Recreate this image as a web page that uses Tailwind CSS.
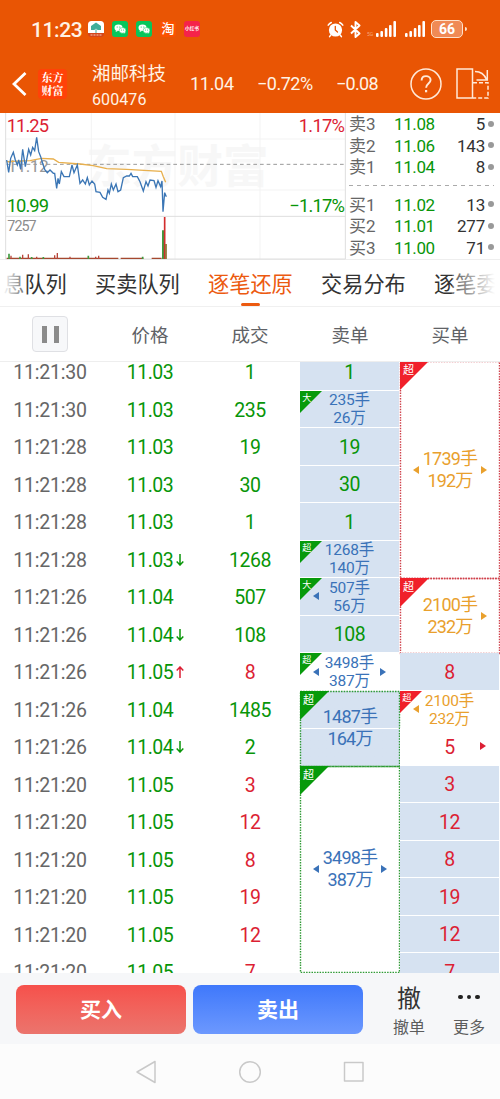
<!DOCTYPE html>
<html lang="zh-CN">
<head>
    <meta charset="UTF-8">
    <meta name="viewport" content="width=device-width, initial-scale=1.0">
    <title>湘邮科技 600476</title>
    <script src="https://cdn.jsdelivr.net/npm/@tailwindcss/browser@4"></script>
</head>
<body class="w-[500px] h-[1099px] overflow-hidden bg-white font-['Roboto','Noto_Sans_CJK_SC',sans-serif] text-[#333]">
    <!-- Header -->
    <header class="h-[113px] bg-[#e95504] text-[#fff3e6]">
        <!-- Status bar -->
        <div class="h-[58px] pl-[31px] flex items-center">
            <span class="w-[57px] text-[21px] leading-none font-medium tracking-[-0.4px] pt-0.5">11:23</span>
            <div class="flex items-center gap-2">
                <svg class="w-4 h-4" viewBox="0 0 16 16">
                    <rect width="16" height="16" rx="3.5" fill="#d5461b"/>
                    <path d="M0 12V3.5A3.5 3.5 0 0 1 3.5 0h9A3.5 3.5 0 0 1 16 3.500V12z" fill="#fff"/>
                    <path d="M8 1.500L13 5v4h-3.500L8.500 7.500V12h-1V7.500L6.500 9H3V5z" fill="#3fae9b"/>
                    <path d="M2.500 14h11" stroke="#f6c9b5" stroke-width="1.200" stroke-dasharray="2 1"/>
                </svg>
                <svg class="w-4 h-4" viewBox="0 0 16 16">
                    <rect width="16" height="16" rx="3" fill="#07c65b"/>
                    <ellipse cx="6.500" cy="6.800" rx="4" ry="3.300" fill="#fff"/>
                    <ellipse cx="10.500" cy="9.400" rx="3.400" ry="2.800" fill="#fff" stroke="#07c65b" stroke-width=".5"/>
                    <path d="M4 9l-.3 2 2-1zM12 11.500l1 1.200.2-2z" fill="#fff"/>
                    <g fill="#07c65b"><circle cx="5.200" cy="6" r=".6"/><circle cx="7.800" cy="6" r=".6"/><circle cx="9.400" cy="9" r=".5"/><circle cx="11.600" cy="9" r=".5"/></g>
                </svg>
                <svg class="w-4 h-4" viewBox="0 0 16 16">
                    <rect width="16" height="16" rx="3" fill="#07c65b"/>
                    <ellipse cx="6.500" cy="6.800" rx="4" ry="3.300" fill="#fff"/>
                    <ellipse cx="10.500" cy="9.400" rx="3.400" ry="2.800" fill="#fff" stroke="#07c65b" stroke-width=".5"/>
                    <path d="M4 9l-.3 2 2-1zM12 11.500l1 1.200.2-2z" fill="#fff"/>
                    <g fill="#07c65b"><circle cx="5.200" cy="6" r=".6"/><circle cx="7.800" cy="6" r=".6"/><circle cx="9.400" cy="9" r=".5"/><circle cx="11.600" cy="9" r=".5"/></g>
                </svg>
                <span class="w-4 h-4 rounded-[3px] bg-[#fb5200] text-[13px] leading-4 text-center text-white font-medium">淘</span>
                <span class="w-4 h-4 rounded-[3px] bg-[#f5234a] text-[4.7px] leading-4 text-center text-white font-bold">小红书</span>
            </div>
            <svg class="w-[17px] h-[17px] ml-[127px]" viewBox="0 0 17 17" fill="none" stroke="#fff" stroke-linecap="round">
                <circle cx="8.500" cy="9" r="6.600" fill="#fff" stroke="none"/>
                <path d="M1.200 4.200A8 8 0 0 1 4.300 1.500M15.800 4.200A8 8 0 0 0 12.700 1.500" stroke-width="1.500"/>
                <path d="M3.800 14L2.600 15.600M13.200 14l1.200 1.600" stroke-width="1.500"/>
                <path d="M8.300 5.300V9l2.200 2" stroke="#e95504" stroke-width="1.300"/>
            </svg>
            <svg class="w-[11px] h-[17px] ml-1.5" viewBox="0 0 11 17" fill="none" stroke="#fff" stroke-width="1.900" stroke-linejoin="round">
                <path d="M1 4.500l8.500 8L5.500 16V1l4 3.500L1 12.500"/>
            </svg>
            <span class="w-[9px] ml-1.5 mt-2.5 text-[5px] leading-none text-[#f5a77c]">5G</span>
            <svg class="w-5 h-4" viewBox="0 0 20 16" fill="#fff">
                <rect x="0" y="12" width="2.600" height="4" rx="1"/><rect x="4.400" y="10" width="2.600" height="6" rx="1"/><rect x="8.800" y="7" width="2.600" height="9" rx="1"/><rect x="13" y="4" width="2.600" height="12" rx="1"/><rect x="17.400" y="0" width="2.600" height="16" rx="1"/>
            </svg>
            <svg class="w-5 h-4 ml-[9px]" viewBox="0 0 20 16" fill="#fff">
                <rect x="0" y="12" width="2.600" height="4" rx="1"/><rect x="4.400" y="10" width="2.600" height="6" rx="1"/><rect x="8.800" y="7" width="2.600" height="9" rx="1"/><rect x="13" y="4" width="2.600" height="12" rx="1"/><rect x="17.400" y="0" width="2.600" height="16" rx="1"/>
            </svg>
            <span class="w-8 h-[18px] ml-1.5 rounded-[5px] border-[1.5px] border-[#ffe1ca] bg-[#f08a55] text-white text-sm leading-4 font-bold text-center">66</span>
            <span class="w-0.5 h-1 ml-0.5 rounded-r bg-[#ffe1ca]"></span>
        </div>
        <!-- Stock title -->
        <div class="h-[55px] pl-3 flex items-center">
            <svg class="w-[15px] h-6 -mt-1" viewBox="0 0 15 24" fill="none" stroke="#fff" stroke-width="2.800"><path d="M13.500 1L2 12l11.500 11"/></svg>
            <div class="w-[29px] h-[30px] ml-[11px] -mt-1 rounded bg-[#ff4208] font-['Noto_Serif_CJK_SC','Noto_Sans_CJK_SC',serif] font-bold text-white text-[11px] leading-[13px] text-center pt-0.5">东方<br>财富</div>
            <div class="w-[100px] pl-[25px]">
                <div class="text-[18.500px] leading-[28px] whitespace-nowrap">湘邮科技</div>
                <div class="text-base leading-6 tracking-[0.1px]">600476</div>
            </div>
            <span class="w-[67px] ml-[23px] text-[18px] -mt-1 tracking-[-0.3px]">11.04</span>
            <span class="w-[79px] text-[18px] -mt-1 tracking-[-0.5px]">−0.72%</span>
            <span class="w-[74px] text-[18px] -mt-1 tracking-[-0.7px]">−0.08</span>
            <svg class="w-8 h-8 -mt-1" viewBox="0 0 32 32" fill="none" stroke="#ffe9d8" stroke-width="1.500">
                <circle cx="16" cy="16" r="15"/>
                <path d="M11.600 12.500c0-6 9-5.500 9-.5 0 3.500-4.500 3.500-4.500 7.800" stroke-width="1.900"/>
                <path d="M16.100 22v2.300" stroke-width="2.200"/>
            </svg>
            <svg class="w-[33px] h-[31px] ml-3.5 -mt-1" viewBox="0 0 33 31" fill="none" stroke="#ffe9d8" stroke-width="1.500">
                <path d="M1 1h15.500v29H1z"/>
                <path d="M17 14.800h15V30H17" stroke-dasharray="4 2"/>
                <path d="M19 3.500c6 0 9.500 3 11.500 8M31.300 2v10H20.500"/>
            </svg>
        </div>
    </header>

    <!-- Mini chart and order book -->
    <section class="h-[147px] flex border-b border-[#eee]">
        <svg class="w-[346px] h-[147px] shrink-0" viewBox="0 9 1038 441" fill="none">
            <text x="258" y="218" font-size="137" font-weight="700" fill="#f7f7f7">东方财富</text>
            <path d="M17 87H1036M17 240H1036M274 9V447M525 9V447M780 9V447" stroke="#f3f3f3" stroke-width="3"/>
            <path d="M17 9V447M1036 9V447M17 319H1036M17 447H1036" stroke="#dedede" stroke-width="3"/>
            <text x="22" y="186" font-size="52" textLength="124" fill="#999">11.12</text>
            <path d="M20 163H1036" stroke="#999" stroke-width="3" stroke-dasharray="11 9"/>
            <path d="M20 155L90 152 125 145 160 147 176 157 240 162 280 167 320 176 380 178 484 184 490 200 497 217" stroke="#e8b04e" stroke-width="4"/>
            <path d="M20 150L26 187 32 145 40 127 46 150 52 165 56 150 62 178 68 118 76 170 86 118 92 135 98 112 104 122 110 82 116 125 122 140 128 160 134 178 142 188 150 180 160 190 164 190 170 235 174 205 178 222 184 185 192 200 208 200 216 165 222 188 232 165 240 220 248 210 256 222 262 203 268 225 276 213 284 222 288 245 300 247 308 262 318 268 324 240 328 250 334 222 340 240 348 222 354 245 362 240 370 203 380 198 388 198 393 190 398 200 412 200 420 215 430 243 438 215 444 228 450 210 462 212 468 232 474 212 482 230 486 213 489 305 494 248 499 260" stroke="#3b76b5" stroke-width="4"/>
            <!-- volume -->
            <path d="M20 445H355M362 445H430M455 445H485" stroke="#a5482f" stroke-width="4"/>
            <path d="M27 447V431M60 447V440M95 447V441M130 447V441M265 447V437M428 447V440" stroke="#3f9a3f" stroke-width="5"/>
            <path d="M33 447V437M68 447V434M85 447V433M110 447V440M164 447V436M172 447V429M210 447V440M287 447V440M296 447V437" stroke="#b8453a" stroke-width="4"/>
            <path d="M489 447V361" stroke="#3f9a3f" stroke-width="6"/>
            <path d="M494 447V321" stroke="#d22d2d" stroke-width="5"/>
            <path d="M498 447V402" stroke="#8a6d2c" stroke-width="5"/>
            <text x="20" y="65" font-size="55" textLength="127" fill="#dc1f34">11.25</text>
            <text x="20" y="305" font-size="55" textLength="127" fill="#089508">10.99</text>
            <text x="22" y="363" font-size="43" textLength="88" fill="#8c8c8c">7257</text>
            <text x="896" y="65" font-size="55" textLength="139" fill="#dc1f34">1.17%</text>
            <text x="868" y="305" font-size="55" textLength="167" fill="#089508">−1.17%</text>
        </svg>
        <div class="flex-1 pl-[3px] pr-1.5 pt-px text-[17px] leading-[21.500px]">
            <div id="asks"></div>
            <div class="h-4 pt-1.5"><svg class="w-full h-px" viewBox="0 0 145 1" preserveAspectRatio="none"><path d="M0 .5H145" stroke="#aaa" stroke-dasharray="4 4"/></svg></div>
            <div id="bids"></div>
        </div>
    </section>

    <!-- Tabs -->
    <nav class="relative h-[47px] flex gap-7 -ml-[18px] w-[518px] overflow-hidden whitespace-nowrap border-b border-[#f0f0f0] text-[21.200px] leading-[49px]">
        <span class="w-[85px] shrink-0">消息队列</span>
        <span class="w-[85px] shrink-0">买卖队列</span>
        <span class="relative w-[85px] shrink-0 text-[#ec5a10]">逐笔还原<i class="absolute left-[33px] bottom-0 w-[19px] h-[3px] rounded-full bg-[#ec5a10]"></i></span>
        <span class="w-[85px] shrink-0">交易分布</span>
        <span class="w-[85px] shrink-0">逐笔委托</span>
        <div class="absolute left-0 top-0 w-[43px] h-11 bg-linear-to-r from-white from-48% to-white/30"></div>
        <div class="absolute right-0 top-0 w-12 h-11 bg-linear-to-l from-white from-10% to-white/20"></div>
    </nav>

    <!-- Column titles -->
    <div class="h-[54px] grid grid-cols-5 items-center text-center text-[18.500px] text-[#606266]">
        <div class="w-9 h-9 mx-auto rounded border-[1.5px] border-[#dfe0e4] bg-[#f7f8fa] flex items-center justify-center gap-[7px]">
            <i class="w-[5px] h-[17px] bg-[#8b8b8b]"></i><i class="w-[5px] h-[17px] bg-[#8b8b8b]"></i>
        </div>
        <span class="pt-1.5">价格</span><span class="pt-1.5">成交</span><span class="pt-1.5">卖单</span><span class="pt-1.5">买单</span>
    </div>

    <!-- Tick list -->
    <main class="h-[612px] overflow-hidden border-t border-[#eee]">
        <div class="-mt-[9px] flex">
            <div id="ticks" class="w-[300px] text-[19.500px]"></div>
            <div id="sell" class="w-[100px] grid auto-rows-[37.500px]"></div>
            <div id="buy" class="w-[100px] grid auto-rows-[37.500px]"></div>
        </div>
    </main>

    <!-- Trade bar -->
    <footer class="h-[71px] pl-4 pt-[11.500px] flex bg-[#f6f7f9]">
        <button class="w-[170px] h-[49px] pt-[3px] rounded-lg bg-linear-to-b from-[#f6504b] to-[#eb746d] text-white text-[21px] font-bold">买入</button>
        <button class="w-[170px] h-[49px] pt-[3px] ml-[7px] rounded-lg bg-linear-to-b from-[#3f78fb] to-[#6c98fe] text-white text-[21px] font-bold">卖出</button>
        <div class="w-[60px] ml-4 text-center">
            <div class="h-[30px] text-2xl leading-[28px]">撤</div>
            <div class="text-base leading-[26px] text-[#5c5c5c]">撤单</div>
        </div>
        <div class="w-[60px] text-center">
            <div class="h-[30px] flex justify-center gap-1 pt-2.5"><i class="w-[4.500px] h-[4.500px] rounded-full bg-[#222]"></i><i class="w-[4.500px] h-[4.500px] rounded-full bg-[#222]"></i><i class="w-[4.500px] h-[4.500px] rounded-full bg-[#222]"></i></div>
            <div class="text-base leading-[26px] text-[#5c5c5c]">更多</div>
        </div>
    </footer>

    <!-- System navigation -->
    <div class="h-[55px] bg-[#fcfcfc] flex items-center justify-center">
        <svg class="w-[230px] h-6" viewBox="0 0 230 24" fill="none" stroke="#c9c9c9" stroke-width="1.500" stroke-linejoin="round">
            <path d="M20 1.500v21L2 12z"/>
            <circle cx="115" cy="12" r="10.300"/>
            <rect x="209.500" y="2.500" width="18.500" height="18.500"/>
        </svg>
    </div>

    <script>
        const GREEN = 'text-[#089508]';
        const RED = 'text-[#dc1f34]';

        // Order book
        function bookRow([label, price, size]) {
            return `<div class="flex items-center h-[21.500px]">
                <span class="w-[45px] text-[#666]">${label}</span>
                <span class="w-[50px] tracking-[-0.4px] ${GREEN}">${price}</span>
                <span class="flex-1 text-right tracking-[-0.2px]">${size}</span>
                <i class="w-1.5 h-1.5 ml-[3px] -mt-0.5 rounded-full bg-[#999]"></i>
            </div>`;
        }
        document.getElementById('asks').innerHTML = [['卖3', '11.08', 5], ['卖2', '11.06', 143], ['卖1', '11.04', 8]].map(bookRow).join('');
        document.getElementById('bids').innerHTML = [['买1', '11.02', 13], ['买2', '11.01', 277], ['买3', '11.00', 71]].map(bookRow).join('');

        // time, price, volume, volume colour, price move
        const ticks = [
            ['11:21:30', '11.03', 1, GREEN], ['11:21:30', '11.03', 235, GREEN],
            ['11:21:28', '11.03', 19, GREEN], ['11:21:28', '11.03', 30, GREEN],
            ['11:21:28', '11.03', 1, GREEN], ['11:21:28', '11.03', 1268, GREEN, 'down'],
            ['11:21:26', '11.04', 507, GREEN], ['11:21:26', '11.04', 108, GREEN, 'down'],
            ['11:21:26', '11.05', 8, RED, 'up'], ['11:21:26', '11.04', 1485, GREEN],
            ['11:21:26', '11.04', 2, GREEN, 'down'], ['11:21:20', '11.05', 3, RED],
            ['11:21:20', '11.05', 12, RED], ['11:21:20', '11.05', 8, RED],
            ['11:21:20', '11.05', 19, RED], ['11:21:20', '11.05', 12, RED],
            ['11:21:20', '11.05', 7, RED],
        ];
        const moves = {
            down: `<svg class="absolute left-[76px] top-[13px] w-2 h-3" viewBox="0 0 8 12" fill="none" stroke="#089508" stroke-width="1.500"><path d="M4 0v11M.7 7.500L4 11l3.300-3.500"/></svg>`,
            up: `<svg class="absolute left-[76px] top-[13px] w-2 h-3" viewBox="0 0 8 12" fill="none" stroke="#dc1f34" stroke-width="1.500"><path d="M4 12V1M.7 4.500L4 1l3.300 3.500"/></svg>`,
        };
        document.getElementById('ticks').innerHTML = ticks.map(([time, price, vol, color, move]) => `
            <div class="h-[37.500px] grid grid-cols-3 text-center leading-[39.500px]">
                <span class="text-[#666] tracking-[-0.2px]">${time}</span>
                <span class="relative tracking-[-0.5px] ${GREEN}">${price}${moves[move] || ''}</span>
                <span class="tracking-[-0.4px] ${color}">${vol}</span>
            </div>`).join('');

        // Order cells
        function plain(n, color, bg = 'bg-[#d6e2f1]') {
            return `<div class="relative mr-px pt-0.5 border-b border-white text-[19.500px] tracking-[-0.4px] flex items-center justify-center ${bg} ${color}">${n}</div>`;
        }
        function badge(text, fill, big) {
            return `<svg class="absolute left-0 top-0 ${big ? 'w-[29px] h-[29px]' : 'w-[22px] h-[22px]'}" viewBox="0 0 29 29">
                <path d="M0 0h29L0 29z" fill="${fill}"/><text x="3" y="13" font-size="${big ? 11 : 12}" fill="#fff">${text}</text></svg>`;
        }
        // fine dotted outline round a merged cell
        function outline(color) {
            return `<svg class="absolute inset-0 w-full h-full overflow-visible" fill="none">
                <rect x=".5" y=".5" width="99%" height="100%" stroke="${color}" stroke-width="1.400" stroke-dasharray="1.500 1.200"/></svg>`;
        }
        const left = `<svg class="absolute left-[13px] top-1/2 -mt-1 w-1.5 h-2 fill-current" viewBox="0 0 6 8"><path d="M6 0v8L0 4z"/></svg>`;
        const right = `<svg class="absolute right-[13px] top-1/2 -mt-1 w-1.5 h-2 fill-current" viewBox="0 0 6 8"><path d="M0 0v8l6-4z"/></svg>`;
        function order({ tag, fill, hands, amount, cls, arrows = '', line = '' }) {
            const big = line !== '';
            return `<div class="relative flex flex-col items-center justify-center ${big ? 'text-[18px] leading-[22px] tracking-[-0.8px]' : 'mr-px pt-px text-[15.500px] leading-[18px] tracking-[-0.2px]'} ${cls}">
                ${big ? outline(line) : ''}${badge(tag, fill, big)}<span>${hands}手</span><span>${amount}万</span>${arrows}</div>`;
        }
        const BLUE = 'text-[#3a72b8]';
        const GOLD = 'text-[#e9a02d]';
        const G = '#079a0b';
        const R = '#f0202a';
        const G_LINE = '#2f9a35';
        const R_LINE = '#d0424c';

        document.getElementById('sell').innerHTML = [
            plain(1, GREEN),
            order({ tag: '大', fill: G, hands: 235, amount: 26, cls: `bg-[#d6e2f1] border-b border-white ${BLUE}` }),
            plain(19, GREEN), plain(30, GREEN), plain(1, GREEN),
            order({ tag: '超', fill: G, hands: 1268, amount: 140, cls: `bg-[#d6e2f1] border-b border-white ${BLUE}` }),
            order({ tag: '大', fill: G, hands: 507, amount: 56, cls: `bg-[#d6e2f1] border-b border-white ${BLUE}`, arrows: left }),
            plain(108, GREEN),
            order({ tag: '超', fill: G, hands: 3498, amount: 387, cls: BLUE, arrows: left + right }),
            order({ tag: '超', fill: G, hands: 1487, amount: 164, line: G_LINE, cls: `row-span-2 bg-linear-to-b from-[#d6e2f1] from-49% via-white via-50% to-[#d6e2f1] to-51% ${BLUE}` }),
            order({ tag: '超', fill: G, hands: 3498, amount: 387, line: G_LINE, cls: `row-span-6 mb-[19px] ${BLUE}`, arrows: left + right }),
        ].join('');

        document.getElementById('buy').innerHTML = [
            order({ tag: '超', fill: R, hands: 1739, amount: 192, line: R_LINE, cls: `row-span-6 mt-2 ${GOLD}`, arrows: left + right }),
            order({ tag: '超', fill: R, hands: 2100, amount: 232, line: R_LINE, cls: `row-span-2 ${GOLD}`, arrows: right }),
            plain(8, RED),
            order({ tag: '超', fill: R, hands: 2100, amount: 232, cls: GOLD, arrows: left }),
            plain(5 + right, RED, 'bg-white'),
            ...[3, 12, 8, 19, 12, 7].map(n => plain(n, RED)),
        ].join('');
    </script>
</body>
</html>
